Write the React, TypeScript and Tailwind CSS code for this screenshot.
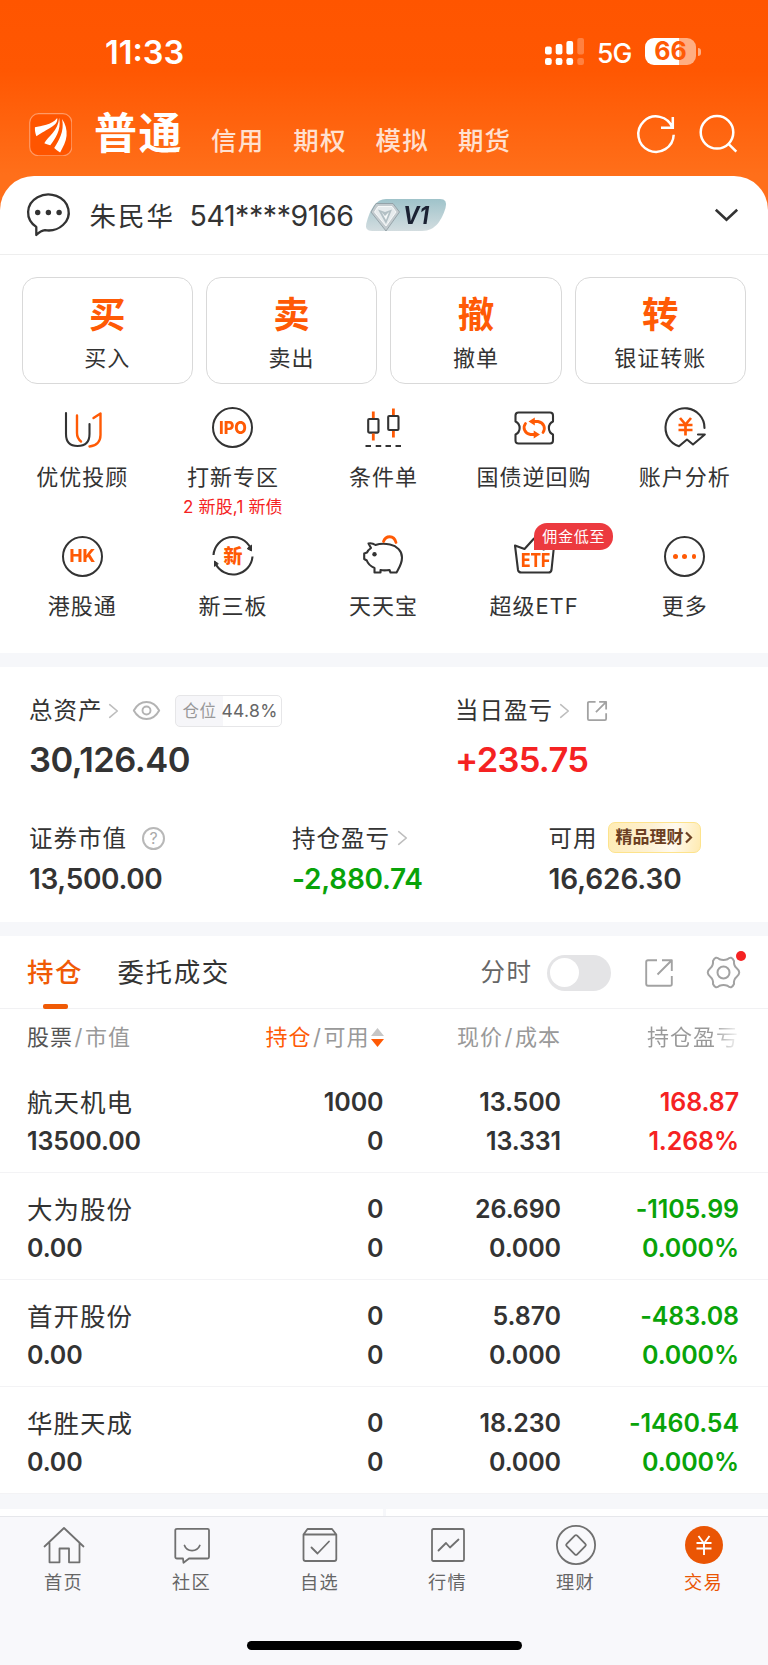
import type { ReactNode } from "react";

const DARK = "#333333";
const ORANGE = "#ff5a05";

function Icon({ children, className = "size-[42px]", box = "0 0 40 40", w = 2.1, stroke = DARK }: {
  children: ReactNode; className?: string; box?: string; w?: number; stroke?: string;
}) {
  return (
    <svg className={`block shrink-0 overflow-visible ${className}`} viewBox={box} fill="none" stroke={stroke}
      strokeWidth={w} strokeLinecap="round" strokeLinejoin="round">
      {children}
    </svg>
  );
}

function Chevron({ className = "" }: { className?: string }) {
  return (
    <Icon className={`h-[14px] w-[9px] ${className}`} box="0 0 9 14" w={1.6} stroke="#bdbdbd">
      <path d="M.7 .7L8.3 7L.7 13.3" />
    </Icon>
  );
}

function StatusBar() {
  return (
    <div className="flex h-[104px] items-start pl-[105px] pt-[37px] text-white">
      <span className="w-[440px] text-[32.500px] font-semibold leading-[31px]">11:33</span>
      <svg className="mt-px h-[27px] w-[39px]" viewBox="0 0 39 27" fill="#fff">
        <rect x="0" y="8.5" width="6.7" height="8" rx="2" />
        <rect x="10.7" y="6" width="6.7" height="10.5" rx="2" />
        <rect x="21.4" y="3" width="6.7" height="13.5" rx="2" />
        <rect x="32.3" y="0" width="6.7" height="16.5" rx="2" opacity=".25" />
        <rect x="0" y="20" width="6.7" height="7" rx="2.2" />
        <rect x="10.7" y="20" width="6.7" height="7" rx="2.2" />
        <rect x="21.4" y="20" width="6.7" height="7" rx="2.2" />
        <rect x="32.3" y="20" width="6.7" height="7" rx="2.2" opacity=".25" />
      </svg>
      <span className="ml-[13px] mt-[2.500px] w-[34.500px] whitespace-nowrap text-[26.500px] font-medium leading-[27px] tracking-[-1px]">5G</span>
      <div className="ml-[13.500px] mt-[1px] flex h-[27px] w-[51px] items-center justify-center rounded-[9px] bg-[linear-gradient(90deg,#fff_66%,#ffae82_66%)] text-[25px] font-bold leading-none text-[#ff5a05]">66</div>
      <div className="ml-[1.500px] mt-[10.500px] h-[8px] w-[3.500px] rounded-r-full bg-[#ffae82]" />
    </div>
  );
}

function Header() {
  return (
    <div className="flex h-[71.500px] items-start pl-[28.500px]">
      <svg className="mt-[8.500px] size-[43.500px]" viewBox="0 0 44 44">
        <rect x=".7" y=".7" width="42.6" height="42.6" rx="9" fill="#ff5500" stroke="#ff9a66" strokeWidth="1.2" />
        <path fill="#fff" d="M6 14.500C12 12.500 23 12.500 28.500 5C30 13 18 16 7.500 23.500C6.300 21 5.800 17 6 14.500ZM30.500 5C33 17 26 27 21.500 32.500C19 32 17 31 15.500 30.500C19 24 29.500 18 30.500 5ZM33.500 6C37 11 38.500 17 38 23C37.500 29 34.500 34 31.500 40C29 38.500 27 37 25.500 35.500C30 28 36 19 33.500 6Z" />
      </svg>
      <span className="ml-[22px] mt-[6px] w-[117px] text-[43px] font-bold leading-[47px] tracking-[1.500px] text-white">普通</span>
      <div className="mt-[21px] flex text-[25.500px] font-medium leading-[32px] tracking-[1.200px] text-[#ffe0d0]">
        {["信用", "期权", "模拟", "期货"].map((t) => <span key={t} className="w-[82.300px]">{t}</span>)}
      </div>
      <Icon className="ml-[96px] mt-[10px] size-[40px]" w={2.500} stroke="#fff">
        <path strokeLinecap="butt" strokeLinejoin="miter" d="M37.700 20.800A17.700 17.700 0 1 1 36.500 13.700M36.800 3V13.700H25" />
      </Icon>
      <Icon className="ml-[22.500px] mt-[10px] size-[40px]" w={2.500} stroke="#fff">
        <circle cx="18" cy="18.3" r="16.3" />
        <path strokeLinecap="butt" d="M29.500 29.800L37.300 37.600" />
      </Icon>
    </div>
  );
}

function Account() {
  return (
    <div className="flex h-[79px] items-center border-b-[1.500px] border-[#eeeeee] pl-[27px] pr-[30px] text-[#333]">
      <Icon className="mt-[1px] h-[44px] w-[43px]" box="0 0 43 44" w={2.300}>
        <path d="M9.300 33.900A20.300 18 0 1 1 18 37.200C15 37.600 12 39.500 9.300 42Z" />
        <g fill={DARK} stroke="none"><circle cx="10.7" cy="19.5" r="2.7" /><circle cx="21.4" cy="19.5" r="2.7" /><circle cx="32.1" cy="19.5" r="2.7" /></g>
      </Icon>
      <span className="ml-[19.500px] mt-[3px] w-[100px] text-[26.500px] leading-none tracking-[2px]">朱民华</span>
      <span className="mt-[3px] w-[176.500px] whitespace-nowrap text-[28.500px] leading-none tracking-[-0.400px]">541****9166</span>
      <div className="relative mt-[1px] h-[32px] w-[80px]">
        <svg className="block h-full w-full overflow-visible" viewBox="0 0 80 32">
          <defs><linearGradient id="tier" x1="0" y1="0" x2="0" y2="1"><stop stopColor="#9fc3ca" /><stop offset="1" stopColor="#d3dde0" /></linearGradient></defs>
          <path fill="url(#tier)" d="M20 0H74Q82 0 79.500 9C76 20 70 32 56 32H6Q-1.500 32 .3 24.500C4 10 10 0 20 0Z" />
          <path fill="#c3cbcf" stroke="#8b999f" strokeWidth=".8" d="M10 4.500H27L33.500 13L20 32L5 13Z" />
          <path fill="#e6ebed" stroke="#fff" strokeWidth=".8" d="M12 7.500H26L30 13L20 27L8.500 13Z" />
          <path fill="#b3c0c5" d="M12 10.500L19 13L26 10.500L20 25Z" />
          <path fill="#f4f7f8" d="M15.500 13L19 17L23 13L20 21Z" />
        </svg>
        <span className="absolute left-[36.500px] top-[4px] inline-block origin-left scale-x-[.9] text-[24.500px] font-bold italic leading-none text-[#1b2233]">V1</span>
      </div>
      <Icon className="ml-auto mt-[1px] h-[12px] w-[23px]" box="0 0 23 12" w={2.600}>
        <path strokeLinecap="butt" strokeLinejoin="miter" d="M.8 .8L11.500 10.700L22.200 .8" />
      </Icon>
    </div>
  );
}

const actions = [["买", "买入"], ["卖", "卖出"], ["撤", "撤单"], ["转", "银证转账"]];

function Actions() {
  return (
    <div className="mt-[22px] grid grid-cols-4 gap-[13px] pl-[21.500px] pr-[22px]">
      {actions.map(([big, small]) => (
        <div key={big} className="flex h-[107px] flex-col items-center rounded-[15px] border-[1.200px] border-[#d9d9d9] pt-[17px]">
          <span className="text-[36.500px] font-bold leading-[40px] text-[#ff5a05]">{big}</span>
          <span className="mt-[10.500px] text-[22px] leading-[26px] tracking-[1px] text-[#333]">{small}</span>
        </div>
      ))}
    </div>
  );
}

function Ring({ children }: { children: ReactNode }) {
  return <div className="flex size-[41px] items-center justify-center rounded-full border-2 border-[#333] text-[#ff5a05]">{children}</div>;
}

const tools: { label: string; note?: string; badge?: string; icon: ReactNode }[] = [
  { label: "优优投顾", icon: <Icon className="size-[40px]"><path d="M4 5V26C4 34 8 38 15.500 38S27.500 34 27.500 26V16" /><path stroke={ORANGE} strokeWidth="2.4" d="M15 7.500V25C15 29 16.500 31.500 19 33.500M31.500 10L38.500 5.500V27C38.500 34 34 38 27.500 38.500" /></Icon> },
  { label: "打新专区", note: "2 新股,1 新债", icon: <Ring><span className="inline-block scale-x-[.93] text-[17.500px] font-extrabold leading-none">IPO</span></Ring> },
  { label: "条件单", icon: (
    <Icon className="size-[40px]">
      <rect x="5.2" y="11" width="10.3" height="13.6" rx="1" /><rect x="25.2" y="8" width="10.3" height="14" rx="1" />
      <path strokeLinecap="butt" d="M2.500 38H8M12.700 38H18.200M22.500 38H28M32.500 38H38" />
      <path stroke={ORANGE} strokeWidth="2.8" strokeLinecap="butt" d="M10.300 3.500V10M10.300 25.500V32.500M30.400 .5V7M30.400 23V29.500" />
    </Icon>) },
  { label: "国债逆回购", icon: (
    <Icon className="size-[40px]">
      <path d="M4.500 4.500H36Q39 4.500 39 7.500V13.500C33.500 16 33.500 24 39 26.500V32.500Q39 35.500 36 35.500H4.500Q1.500 35.500 1.500 32.500V26.500C7 24 7 16 1.500 13.500V7.500Q1.500 4.500 4.500 4.500Z" />
      <g stroke={ORANGE} strokeWidth="2.8"><path d="M11.500 15.500C8.500 19.500 10.500 25.500 16.500 26.500H21" /><path d="M29 24.500C32 20.500 30 14.500 24 13.500H19.500" /></g>
      <path fill={ORANGE} stroke="none" d="M20.800 9.500V17.500L14.500 13.500ZM19.700 22.500V30.500L26 26.500Z" />
    </Icon>) },
  { label: "账户分析", icon: (
    <Icon className="size-[40px]">
      <path d="M39.500 20A19.500 19.500 0 1 0 14 38.300L22 31.500L28 36.500L39.800 26.500H33" />
      <path stroke={ORANGE} strokeWidth="2.7" strokeLinecap="butt" d="M15 10L20.500 16.500L26 10M20.500 16V27.500M13.500 17H27.500M13.500 22H27.500" />
    </Icon>) },
  { label: "港股通", icon: <Ring><span className="inline-block scale-x-[.96] text-[18px] font-extrabold leading-none">HK</span></Ring> },
  { label: "新三板", icon: (
    <div className="relative size-[40px]">
      <Icon className="size-[40px]">
        <path strokeLinecap="butt" d="M.5 19A19.500 19.500 0 0 1 37.500 12M39.500 20.500A19.500 19.500 0 0 1 2.500 27.500" />
        <path fill={DARK} strokeWidth="1" d="M38.500 9.500V15L34.500 12.800ZM1.500 30V25L5 27.500Z" />
      </Icon>
      <span className="absolute inset-0 flex items-center justify-center text-[19px] font-black leading-none text-[#ff5a05]">新</span>
    </div>) },
  { label: "天天宝", icon: (
    <Icon className="size-[40px]">
      <path d="M5.500 7.500C8 7 11 8 12.500 9C17 7.500 22 7.500 27 8.500C34 10 39 15 39 21.500C39 28 36 32 33.500 36.500H27.500L26.500 34C23 34.500 20 34.500 17.500 34V36.500H11.500V32C8 30.500 5 28 3.800 24.500L1.200 23V17.500L4 16.500C5 14 6.500 13 8 12Z" />
      <circle cx="11.5" cy="18.3" r="2.2" fill={DARK} stroke="none" />
      <path stroke={ORANGE} strokeWidth="2.8" d="M20.500 5.500C22.500 -.5 31 -1.500 33 6.500" />
    </Icon>) },
  { label: "超级ETF", badge: "佣金低至", icon: (
    <div className="relative size-[40px]">
      <Icon className="size-[40px]"><path d="M1 9.500L10.500 13L20 2.500L29.500 13.500L40 10L37.500 34Q37 36.500 34.500 36.500H7.500Q4.500 36.500 4 34Z" /></Icon>
      <span className="absolute left-[6.500px] top-[15px] inline-block origin-left scale-x-[.84] text-[18.500px] font-extrabold leading-none text-[#ff5a05]">ETF</span>
    </div>) },
  { label: "更多", icon: (
    <Ring><div className="flex gap-[4.600px]"><i className="size-[4.700px] rounded-full bg-[#ff5a05]" /><i className="size-[4.700px] rounded-full bg-[#ff5a05]" /><i className="size-[4.700px] rounded-full bg-[#ff5a05]" /></div></Ring>) },
];

function Tools() {
  return (
    <div className="mt-[23.800px] grid h-[245.700px] grid-cols-5 content-start pl-[7px] pr-[8px]">
      {tools.map((t) => (
        <div key={t.label} className="relative flex h-[128.500px] flex-col items-center">
          <div className="flex h-[41px] items-center">{t.icon}</div>
          {t.badge && <span className="absolute left-[75.500px] top-[-13px] flex h-[27px] w-[79px] items-center justify-center rounded-[13px] rounded-bl-none bg-[#ec3a3f] text-[15px] leading-none tracking-[0.800px] text-white">{t.badge}</span>}
          <span className="mt-[16px] whitespace-nowrap text-[22px] leading-[26px] tracking-[1px] text-[#333]">{t.label}</span>
          {t.note && <span className="mt-[7.500px] whitespace-nowrap text-[17px] leading-[18px] tracking-[0.150px] text-[#f52222]">{t.note}</span>}
        </div>
      ))}
    </div>
  );
}

function Share({ className, w }: { className: string; w: number }) {
  return (
    <Icon className={className} box="0 0 28 28" w={w} stroke="#a2a2a2">
      <path strokeLinecap="butt" d="M12 1.200H3Q1.200 1.200 1.200 3V24.800Q1.200 26.800 3 26.800H25Q26.800 26.800 26.800 25V17M12.500 15.500L26.500 1.500M17 1.200H26.800V12" />
    </Icon>
  );
}

function Assets() {
  return (
    <div className="h-[255.500px] pl-[29px] text-[#333]">
      <div className="flex pt-[27px]">
        <div className="w-[426px]">
          <div className="flex h-[34px] items-center">
            <span className="w-[80px] text-[23.500px] leading-none tracking-[1px]">总资产</span>
            <Chevron />
            <Icon className="ml-[15px] h-[19px] w-[27px]" box="0 0 27 19" w={1.900} stroke="#b3b3b3"><path d="M.8 9.500C7 -1.800 20 -1.800 26.200 9.500C20 20.800 7 20.800 .8 9.500Z" /><circle cx="13.5" cy="9.5" r="4" /></Icon>
            <div className="ml-[14.500px] flex h-[32px] w-[107px] items-center rounded-[5px] border border-[#e6e6e8] bg-[linear-gradient(90deg,#f6f6f9_44.8%,#fff_44.8%)] pl-[7px]">
              <span className="w-[39px] text-[16.500px] leading-none tracking-[0.500px] text-[#999]">仓位</span>
              <span className="text-[17.500px] leading-none tracking-[0.300px] text-[#666]">44.8%</span>
            </div>
          </div>
          <div className="mt-[13px] text-[34.500px] font-semibold leading-[38px] tracking-[-0.500px]">30,126.40</div>
        </div>
        <div>
          <div className="flex h-[34px] items-center">
            <span className="w-[105px] text-[23.500px] leading-none tracking-[1px]">当日盈亏</span>
            <Chevron />
            <Share className="ml-[17.500px] size-[20px]" w={2.500} />
          </div>
          <div className="mt-[13px] text-[34.500px] font-semibold leading-[38px] tracking-[-0.700px] text-[#f52222]">+235.75</div>
        </div>
      </div>
      <div className="mt-[43.500px] flex">
        <div className="w-[263px]">
          <div className="flex h-[32px] items-center">
            <span className="w-[113px] text-[23.500px] leading-none tracking-[1px]">证券市值</span>
            <span className="flex size-[23px] items-center justify-center rounded-full border-2 border-[#b8b8b8] text-[16px] leading-none text-[#aaa]">?</span>
          </div>
          <div className="mt-[9px] text-[28px] font-semibold leading-[32px] tracking-[-0.350px]">13,500.00</div>
        </div>
        <div className="w-[256.500px]">
          <div className="flex h-[32px] items-center">
            <span className="w-[105.500px] text-[23.500px] leading-none tracking-[1px]">持仓盈亏</span>
            <Chevron />
          </div>
          <div className="mt-[9px] text-[28px] font-semibold leading-[32px] tracking-[-0.250px] text-[#09a309]">-2,880.74</div>
        </div>
        <div>
          <div className="flex h-[32px] items-center">
            <span className="w-[59px] text-[23.500px] leading-none tracking-[1px]">可用</span>
            <div className="-mt-px flex h-[31px] w-[93px] items-center rounded-[7px] border-[1.500px] border-[#fde38c] bg-[linear-gradient(100deg,#ffecb5,#fdf1d3_45%,#fffaf0_70%,#ffeab0)] pl-[7px] text-[17px] font-bold leading-none text-[#6b3f22]">
              精品理财
              <svg className="h-[11px] w-[8px] overflow-visible" viewBox="0 0 8 11" fill="none" stroke="#6b3f22" strokeWidth="2.2"><path d="M2 .5L7 5.500L2 10.500" /></svg>
            </div>
          </div>
          <div className="mt-[9px] text-[28px] font-semibold leading-[32px] tracking-[-0.100px]">16,626.30</div>
        </div>
      </div>
    </div>
  );
}

function HoldingTabs() {
  return (
    <div className="relative flex h-[72.300px] items-center border-b-[1.500px] border-[#f1f1f3] pl-[27px] pt-[1px] text-[26.500px] leading-none tracking-[1.600px]">
      <span className="w-[90.500px] font-medium text-[#f05a05]">持仓</span>
      <i className="absolute bottom-[-1px] left-[43px] h-[5px] w-[25px] rounded-[2px] bg-[#f05a05]" />
      <span className="w-[363px] text-[#333]">委托成交</span>
      <span className="w-[66px] text-[24.500px] text-[#666]">分时</span>
      <div className="flex h-[36px] w-[64.500px] items-center rounded-full bg-[#e4e4e6] pl-[3.500px]"><i className="size-[29px] rounded-full bg-white" /></div>
      <Share className="ml-[34px] size-[28px]" w={1.900} />
      <Icon className="ml-[33.500px] size-[33px]" box="-16.5 -16.5 33 33" w={2} stroke="#a2a2a2">
        <path d="M-4 -13.300Q0 -11.800 4 -13.300Q8 -17 10.500 -11.500Q10 -7 13 -4.500Q18.500 0 13 4.500Q10 7 10.500 11.500Q8 17 4 13.300Q0 11.800 -4 13.300Q-8 17 -10.500 11.500Q-10 7 -13 4.500Q-18.500 0 -13 -4.500Q-10 -7 -10.500 -11.500Q-8 -17 -4 -13.300Z" />
        <circle r="6" />
      </Icon>
      <i className="absolute left-[735.500px] top-[14.500px] size-[10.500px] rounded-full bg-[#f52222]" />
    </div>
  );
}

const cols = "grid grid-cols-[200px_156.500px_177.500px_178px] pl-[27px]";

function TableHead() {
  return (
    <div className={`${cols} h-[57.200px] items-center whitespace-nowrap text-[22px] leading-none tracking-[1px] text-[#999]`}>
      <span><span className="text-[#555]">股票</span><span className="mx-[1.500px]">/</span>市值</span>
      <span className="flex items-center justify-end"><span className="text-[#ff5a05]">持仓</span><span className="mx-[1.500px]">/</span>可用
        <svg className="ml-[1px] h-[19px] w-[13px]" viewBox="0 0 13 19"><path fill="#c6c6c6" d="M6.500 0L13 8H0Z" /><path fill={ORANGE} d="M6.500 19L13 11H0Z" /></svg>
      </span>
      <span className="text-right">现价<span className="mx-[1.500px]">/</span>成本</span>
      <span className="bg-[linear-gradient(90deg,#999_85%,#fff_101%)] bg-clip-text text-right leading-[30px] text-transparent">持仓盈亏</span>
    </div>
  );
}

const UP = "text-[#f52222]";
const DOWN = "text-[#09a309]";
const holdings = [
  { name: "航天机电", value: "13500.00", qty: "1000", price: "13.500", cost: "13.331", gain: "168.87", pct: "1.268%", tone: UP },
  { name: "大为股份", value: "0.00", qty: "0", price: "26.690", cost: "0.000", gain: "-1105.99", pct: "0.000%", tone: DOWN },
  { name: "首开股份", value: "0.00", qty: "0", price: "5.870", cost: "0.000", gain: "-483.08", pct: "0.000%", tone: DOWN },
  { name: "华胜天成", value: "0.00", qty: "0", price: "18.230", cost: "0.000", gain: "-1460.54", pct: "0.000%", tone: DOWN },
];

function Holdings() {
  return (
    <div>
      {holdings.map((h) => (
        <div key={h.name} className="h-[107px] border-b-[1.500px] border-[#f3f3f5] pt-[17px] text-[25px] font-semibold leading-[39px] tracking-[-0.100px] text-[#333]">
          <div className={cols}>
            <span className="text-[25.500px] font-normal tracking-[1px]">{h.name}</span>
            <span className="text-right">{h.qty}</span>
            <span className="text-right">{h.price}</span>
            <span className={`text-right ${h.tone}`}>{h.gain}</span>
          </div>
          <div className={cols}>
            <span>{h.value}</span>
            <span className="text-right">0</span>
            <span className="text-right">{h.cost}</span>
            <span className={`text-right ${h.tone}`}>{h.pct}</span>
          </div>
        </div>
      ))}
    </div>
  );
}

const nav = [
  { label: "首页", icon: <path d="M.5 21.500L20 3L39.500 21.500M5.500 18V37.300H15.500V23.500H25V37.300H35.500V18" /> },
  { label: "社区", icon: <path d="M5 3.800H35.500Q37 3.800 37 5.300V32Q37 33.500 35.500 33.500H17L11.500 37.800L11 33.500H5Q3.300 33.500 3.300 32V5.300Q3.300 3.800 5 3.800ZM12.500 20.500C15 27.200 25 27.200 27.800 20.500" /> },
  { label: "自选", icon: <path d="M3.500 9.500L7.500 4H32L36.300 9.500V34Q36.300 36 34.300 36H5.500Q3.500 36 3.500 34ZM3.500 9.500H36.300M11.500 22.500L17.500 28.500L29 16.500" /> },
  { label: "行情", icon: <path d="M5.500 4H34.500Q36 4 36 5.500V34.500Q36 36 34.500 36H5.500Q4 36 4 34.500V5.500Q4 4 5.500 4ZM10.500 25.500L18 18L22 22.500L30.500 14.500" /> },
  { label: "理财", icon: <><circle cx="20" cy="20" r="19.1" /><path d="M18.800 10.700Q20 9.500 21.200 10.700L29.300 18.800Q30.500 20 29.300 21.200L21.200 29.300Q20 30.500 18.800 29.300L10.700 21.200Q9.500 20 10.700 18.800Z" /></> },
  { label: "交易", on: true, icon: <><circle cx="20" cy="20" r="19" fill="#ea5504" stroke="none" /><path stroke="#fff" strokeWidth="1.9" strokeLinecap="butt" d="M14.500 11L20 18.500L25.500 11M20 18V30M12.500 18H27.500M12.500 23.500H27.500" /></> },
];

function NavBar() {
  return (
    <div className="h-[149px] border-t border-[#e6e7eb] bg-[#f8f8fb]">
      <div className="grid grid-cols-6 pt-[8px]">
        {nav.map((n) => (
          <div key={n.label} className={`flex flex-col items-center ${n.on ? "text-[#ea5504]" : "text-[#666]"}`}>
            <Icon className="-ml-[1px] size-[40px]" w={1.800} stroke="#707070">{n.icon}</Icon>
            <span className="-ml-[1px] mt-[6.500px] text-[18.200px] leading-[22px] tracking-[1.200px]">{n.label}</span>
          </div>
        ))}
      </div>
      <div className="mx-auto mt-[47.500px] h-[9px] w-[275px] rounded-full bg-black" />
    </div>
  );
}

export default function App() {
  return (
    <div className="h-[1665px] w-[768px] overflow-hidden bg-white font-['Inter','Noto_Sans_CJK_SC',sans-serif]">
      <div className="bg-[linear-gradient(180deg,#ff5500_0px,#ff5702_70px,#ff6f1a_175px,#ff6f1a_100%)]">
        <StatusBar />
        <Header />
        <div className="rounded-t-[34px] bg-white"><Account /></div>
      </div>
      <Actions />
      <Tools />
      <div className="h-[14px] bg-[#f6f7fa]" />
      <Assets />
      <div className="h-[14px] bg-[#f6f7fa]" />
      <HoldingTabs />
      <TableHead />
      <Holdings />
      <div className="h-[14.700px] bg-[#f6f7fa]" />
      <div className="flex h-[7.300px] justify-center"><div className="w-[3px] bg-[#f6f7fa]" /></div>
      <NavBar />
    </div>
  );
}
